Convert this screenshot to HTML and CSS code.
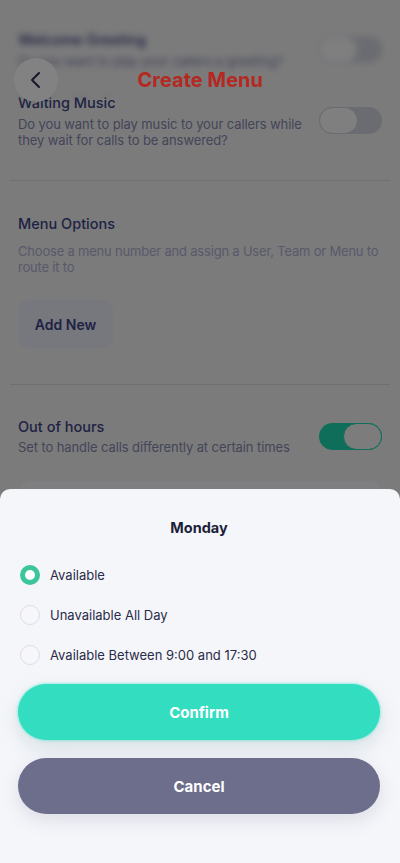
FILE: index.html
```html
<!DOCTYPE html>
<html>
<head>
<meta charset="utf-8">
<link rel="stylesheet" href="styles.css">
</head>
<body>
<div class="screen">
  <main class="content">
    <div class="row">
      <div class="row-text">
        <div class="row-title">Welcome Greeting</div>
        <div class="row-sub">Do you want to play your callers a greeting?</div>
      </div>
      <div class="toggle off"><span class="knob"></span></div>
    </div>
    <div class="row music">
      <div class="row-text">
        <div class="row-title">Waiting Music</div>
        <div class="row-sub">Do you want to play music to your callers while they wait for calls to be answered?</div>
      </div>
      <div class="toggle off"><span class="knob"></span></div>
    </div>
    <hr class="divider">
    <section class="menu-options">
      <div class="row-title">Menu Options</div>
      <div class="row-sub light">Choose a menu number and assign a User, Team or Menu to route it to</div>
      <button class="add-new">Add New</button>
    </section>
    <hr class="divider second">
    <div class="row hours">
      <div class="row-text">
        <div class="row-title">Out of hours</div>
        <div class="row-sub">Set to handle calls differently at certain times</div>
      </div>
      <div class="toggle on"><span class="knob"></span></div>
    </div>
    <div class="peek-card"></div>
  </main>

  <header class="topbar">
    <button class="back" aria-label="Back">
      <svg width="16" height="18" viewBox="0 0 16 18"><path d="M11 2 L4 9 L11 16" fill="none" stroke="#151728" stroke-width="2" stroke-linecap="round" stroke-linejoin="round"/></svg>
    </button>
    <h1 class="title">Create Menu</h1>
    <span class="spacer"></span>
  </header>

  <div class="sheet">
    <h2 class="sheet-title">Monday</h2>
    <ul class="options">
      <li class="option"><span class="radio checked"></span>Available</li>
      <li class="option"><span class="radio"></span>Unavailable All Day</li>
      <li class="option"><span class="radio"></span>Available Between 9:00 and 17:30</li>
    </ul>
    <button class="btn confirm">Confirm</button>
    <button class="btn cancel">Cancel</button>
  </div>
</div>
</body>
</html>
```

FILE: styles.css
```css
* { box-sizing: border-box; }
html, body { margin: 0; padding: 0; }
body {
  font-family: "Inter", "Noto Sans", sans-serif;
  background: #7b7b7c;
}
.screen {
  position: relative;
  width: 400px;
  height: 863px;
  overflow: hidden;
  background: #7b7b7c;
}
.content {
  padding: 30px 18px 0 18px;
  display: flex;
  flex-direction: column;
}
.row {
  display: flex;
  align-items: center;
  justify-content: space-between;
}
.row-text { flex: 1; }
.row-title {
  font-size: 14.5px;
  line-height: 20px;
  font-weight: 500;
  color: #202243;
}
.row-sub {
  font-size: 13px;
  line-height: 16px;
  letter-spacing: -0.1px;
  color: #434558;
  margin-top: 3px;
  max-width: 290px;
}
.row-sub.light { color: #58596a; margin-top: 9px; max-width: none; letter-spacing: -0.2px; }
.music { margin-top: 24px; }
.toggle {
  width: 63px;
  height: 27px;
  border-radius: 14px;
  position: relative;
  flex-shrink: 0;
}
.toggle.off { background: #6b6c71; }
.toggle .knob {
  position: absolute;
  top: 0;
  width: 39px;
  height: 27px;
  border-radius: 14px;
  background: #7f7f80;
  border: 1.5px solid #6a6b70;
}
.toggle.off .knob { left: 0; }
.toggle.on { background: #0f6e5a; }
.toggle.on .knob { right: 0; border-color: #0f6e5a; background: #7c7c7d; }
.divider {
  border: 0;
  height: 1px;
  background: #707073;
  margin: 32px -8px 0 -8px;
}
.divider.second { margin-top: 36px; }
.menu-options {
  padding-top: 33px;
  display: flex;
  flex-direction: column;
  align-items: flex-start;
}
.add-new {
  margin-top: 25px;
  width: 95px;
  height: 48px;
  border: 0;
  border-radius: 10px;
  background: #77787e;
  font-family: inherit;
  font-size: 14px;
  font-weight: 600;
  color: #202243;
}
.hours { margin-top: 32px; }
.hours .row-sub { margin-top: 2px; max-width: none; }
.peek-card {
  margin: 26px 2px 0 2px;
  height: 40px;
  border-radius: 10px;
  background: #7f7f82;
}
.topbar {
  position: absolute;
  top: 0;
  left: 0;
  right: 0;
  height: 98px;
  backdrop-filter: blur(3px);
  -webkit-backdrop-filter: blur(3px);
  display: grid;
  grid-template-columns: 44px 1fr 44px;
  align-items: center;
  padding: 58px 14px 0 14px;
  align-content: start;
}
.back {
  width: 44px;
  height: 44px;
  border-radius: 50%;
  border: 0;
  background: #828283;
  display: flex;
  align-items: center;
  justify-content: center;
  padding: 0;
}
.title {
  margin: 0;
  text-align: center;
  font-size: 20px;
  line-height: 24px;
  font-weight: 700;
  color: #b5271f;
}
.sheet {
  position: absolute;
  left: 0;
  right: 0;
  bottom: 0;
  top: 489px;
  background: #f5f6fa;
  border-radius: 10px 10px 0 0;
  padding: 18px 20px 0 18px;
  display: flex;
  flex-direction: column;
}
.sheet-title {
  margin: 0;
  text-align: center;
  font-size: 14.5px;
  line-height: 20px;
  font-weight: 700;
  color: #1d1f3a;
  padding-top: 11px;
}
.options {
  list-style: none;
  margin: 17px 0 0 0;
  padding: 0;
}
.option {
  height: 40px;
  display: flex;
  align-items: center;
  gap: 10px;
  font-size: 13px;
  color: #2a2c48;
  padding-left: 2px;
}
.radio {
  width: 20px;
  height: 20px;
  border-radius: 50%;
  border: 1.5px solid #dcdcee;
  background: #f7f7fb;
  flex-shrink: 0;
}
.radio.checked {
  border: 5px solid #3cc49a;
  background: #ffffff;
}
.btn {
  width: 362px;
  height: 56px;
  border: 0;
  border-radius: 28px;
  font-family: inherit;
  font-size: 15px;
  font-weight: 700;
  color: #ffffff;
}
.confirm {
  margin-top: 9px;
  background: #33ddc0;
  box-shadow: 0 0 3px rgba(40, 230, 200, 0.8), 0 8px 20px rgba(120, 160, 160, 0.25);
}
.cancel {
  margin-top: 18px;
  background: #6c6e8c;
  box-shadow: 0 6px 18px rgba(100, 110, 140, 0.18);
}
```
